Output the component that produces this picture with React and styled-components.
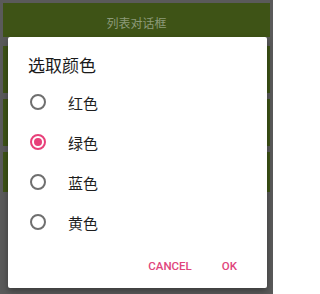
import React, { useState } from "react";
import styled, { createGlobalStyle } from "styled-components";

const Global = createGlobalStyle`
  html, body { margin: 0; padding: 0; }
  body { font-family: Roboto, "Noto Sans CJK SC", sans-serif; }
`;

const Screen = styled.div`
  position: relative;
  width: 273px;
  height: 294px;
  box-sizing: border-box;
  padding: 3px;
  background: #5a5a5a;
  overflow: hidden;
  display: flex;
  flex-direction: column;
`;

const AppBar = styled.div`
  height: 34px;
  background: #3e5316;
  display: flex;
  align-items: center;
  justify-content: center;
  padding-top: 4px;
  box-sizing: border-box;
  color: #8c9a79;
  font-family: "Noto Sans CJK SC", sans-serif;
  font-size: 12px;
`;

const List = styled.div`
  display: flex;
  flex-direction: column;
  gap: 6px;
  margin-top: 9px;
`;

const ListButton = styled.div`
  height: ${(p) => p.$h}px;
  background: #3e5316;
`;

const Dialog = styled.div`
  position: absolute;
  left: 8px;
  top: 37px;
  width: 259px;
  height: 251px;
  background: #ffffff;
  border-radius: 2px;
  box-shadow: 0 3px 6px rgba(0, 0, 0, 0.35);
  display: flex;
  flex-direction: column;
`;

const Title = styled.div`
  padding: 16px 20px 0;
  font-family: "Noto Sans CJK SC", sans-serif;
  font-size: 17px;
  line-height: 23px;
  color: #1a1a1a;
`;

const Options = styled.div`
  margin-top: 6px;
  display: flex;
  flex-direction: column;
`;

const Option = styled.label`
  height: 40px;
  display: flex;
  align-items: center;
  padding-left: 22px;
  gap: 22px;
  cursor: pointer;
`;

const Radio = styled.span`
  width: 16px;
  height: 16px;
  box-sizing: border-box;
  border-radius: 50%;
  border: 2px solid ${(p) => (p.$on ? "#e8407a" : "#6f6f6f")};
  display: flex;
  align-items: center;
  justify-content: center;
  &::after {
    content: "";
    width: 8px;
    height: 8px;
    border-radius: 50%;
    background: #e8407a;
    display: ${(p) => (p.$on ? "block" : "none")};
  }
`;

const Label = styled.span`
  font-family: "Noto Sans CJK SC", sans-serif;
  font-size: 15px;
  color: #1e1e1e;
`;

const Actions = styled.div`
  margin-top: 6px;
  height: 36px;
  display: flex;
  justify-content: flex-end;
  padding-right: 15px;
`;

const TextButton = styled.button`
  border: none;
  background: none;
  padding: 0 15px;
  font-family: Roboto, sans-serif;
  font-weight: 500;
  font-size: 11.5px;
  color: #e0457c;
  cursor: pointer;
`;

const colors = ["红色", "绿色", "蓝色", "黄色"];

export default function App() {
  const [sel, setSel] = useState(1);
  return (
    <>
      <Global />
      <Screen>
        <AppBar>列表对话框</AppBar>
        <List>
          <ListButton $h={47} />
          <ListButton $h={47} />
          <ListButton $h={40} />
        </List>
        <Dialog>
          <Title>选取颜色</Title>
          <Options>
            {colors.map((c, i) => (
              <Option key={c} onClick={() => setSel(i)}>
                <Radio $on={sel === i} />
                <Label>{c}</Label>
              </Option>
            ))}
          </Options>
          <Actions>
            <TextButton>CANCEL</TextButton>
            <TextButton>OK</TextButton>
          </Actions>
        </Dialog>
      </Screen>
    </>
  );
}
